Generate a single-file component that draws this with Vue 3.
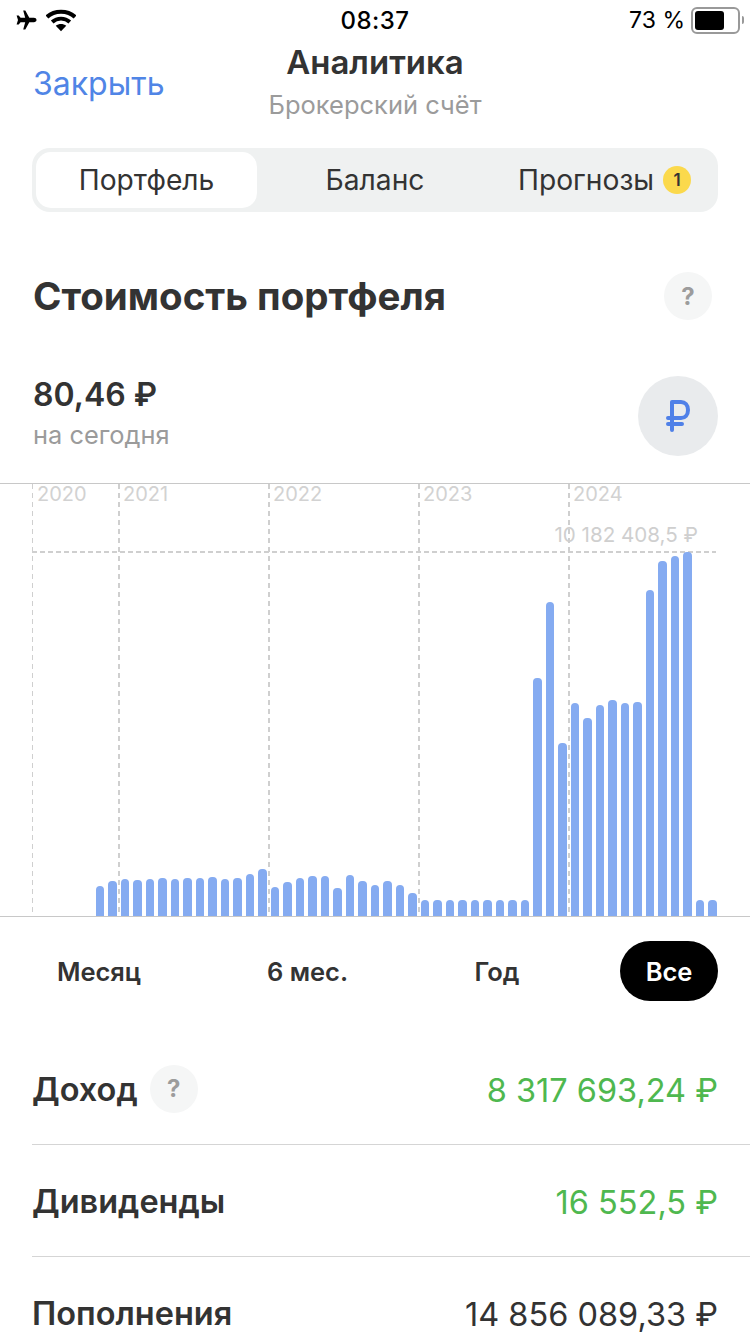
<script setup>
const tops = [886,881,879,880,879,878,879,878,878,877,879,878,874,869,887,882,878,876,876,888,875,881,885,881,885,893,900,900,900,900,900,900,900,900,900,678,602,743,703,718,705,700,703,702,590,561,556,552,900,900]
const bars = tops.map((t) => 916 - t)
const years = [
  { label: '2020', left: 32 },
  { label: '2021', left: 118 },
  { label: '2022', left: 268 },
  { label: '2023', left: 418 },
  { label: '2024', left: 568 }
]
const periods = ['Месяц', '6 мес.', 'Год', 'Все']
</script>

<template>
  <div class="screen">
    <div class="status">
      <div class="status-left">
        <svg width="22" height="20" viewBox="0 0 22 20"><path d="M8.2 0.5h2.1l4 7.3h4.6c1.4 0 2.6.9 2.6 2.2s-1.2 2.2-2.600 2.200h-4.600l-4 7.300H8.200l2-7.300H5.600l-1.900 2.300H1.600L3 10 1.600 5.500h2.100l1.900 2.300h4.600z" fill="#000"/></svg>
        <svg width="30" height="23" viewBox="0 0 32 24"><path d="M1 8.300C8.900.7 23.100.7 31 8.300" fill="none" stroke="#000" stroke-width="4.400"/><path d="M6.600 13.500c5.300-4.700 13.500-4.700 18.800 0" fill="none" stroke="#000" stroke-width="4.200"/><path d="M16 23.500l-5.600-6c3.200-2.400 8-2.400 11.200 0z" fill="#000"/></svg>
      </div>
      <span class="time">08:37</span>
      <div class="status-right">
        <span class="pct">73 %</span>
        <div class="battery"><div class="battery-fill"></div></div>
        <div class="battery-cap"></div>
      </div>
    </div>

    <header class="nav">
      <span class="close">Закрыть</span>
      <div class="nav-title">
        <div class="title">Аналитика</div>
        <div class="subtitle">Брокерский счёт</div>
      </div>
    </header>

    <div class="tabs">
      <div class="tab active">Портфель</div>
      <div class="tab mid">Баланс</div>
      <div class="tab last">Прогнозы <span class="badge">1</span></div>
    </div>

    <div class="heading-row">
      <h1 class="heading">Стоимость портфеля</h1>
      <div class="help big">?</div>
    </div>

    <div class="value-row">
      <div class="value-text">
        <div class="value">80,46 ₽</div>
        <div class="value-sub">на сегодня</div>
      </div>
      <div class="currency">
        <svg width="24" height="32" viewBox="0 0 24 32"><path d="M6 30V2h9c4 0 7 3 7 8s-3 8-7 8H2M2 24h14" fill="none" stroke="#4f80e8" stroke-width="4" stroke-linecap="round" stroke-linejoin="round"/></svg>
      </div>
    </div>

    <div class="chart">
      <div
        v-for="y in years"
        :key="y.label"
        class="vline"
        :style="{ left: y.left + 'px' }"
      ><span class="year">{{ y.label }}</span></div>
      <div class="hline"></div>
      <span class="max">10 182 408,5 ₽</span>
      <div class="bars">
        <div v-for="(h, i) in bars" :key="i" class="bar" :style="{ height: h + 'px' }"></div>
      </div>
    </div>

    <div class="periods">
      <div v-for="p in periods" :key="p" class="period" :class="{ on: p === 'Все' }">{{ p }}</div>
    </div>

    <div class="rows">
      <div class="row">
        <div class="row-label">Доход <span class="help small">?</span></div>
        <div class="row-value green">8 317 693,24 ₽</div>
      </div>
      <div class="row">
        <div class="row-label">Дивиденды</div>
        <div class="row-value green">16 552,5 ₽</div>
      </div>
      <div class="row">
        <div class="row-label">Пополнения</div>
        <div class="row-value">14 856 089,33 ₽</div>
      </div>
    </div>
  </div>
</template>

<style>
html, body { margin: 0; background: #fff; }
</style>

<style scoped>
.screen {
  width: 750px;
  height: 1334px;
  overflow: hidden;
  background: #fff;
  color: #333;
  font-family: Inter, "Noto Sans", sans-serif;
}
.status {
  height: 40px;
  display: grid;
  grid-template-columns: 1fr auto 1fr;
  align-items: center;
  padding: 0 6px 0 15px;
  color: #000;
}
.status-left { display: flex; align-items: center; gap: 9px; }
.time { font-size: 24px; font-weight: 500; letter-spacing: 0.5px; margin-right: 9px; }
.status-right { display: flex; align-items: center; justify-content: flex-end; }
.pct { font-size: 23px; margin-right: 6px; }
.battery {
  width: 41px;
  height: 19px;
  border: 2px solid #999;
  border-radius: 6px;
  padding: 2px;
  box-sizing: content-box;
  display: flex;
}
.battery-fill { width: 29px; background: #000; border-radius: 3px; }
.battery-cap { width: 2px; height: 8px; margin-left: 2px; background: #999; border-radius: 0 2px 2px 0; }
.nav { position: relative; height: 84px; display: flex; align-items: center; padding: 0 33px; }
.close { font-size: 32px; color: #5085e6; position: relative; top: 1px; }
.nav-title { position: absolute; left: 0; right: 0; top: 3px; text-align: center; pointer-events: none; }
.title { font-size: 33px; font-weight: 600; line-height: 38px; }
.subtitle { font-size: 25.5px; color: #9b9b9b; line-height: 28px; margin-top: 10px; }
.tabs {
  margin: 24px 32px 0;
  height: 64px;
  box-sizing: border-box;
  padding: 4px;
  background: #eff1f1;
  border-radius: 18px;
  display: flex;
  align-items: center;
}
.tab { font-size: 28.2px; display: flex; align-items: center; justify-content: center; height: 56px; }
.tab.active { width: 221px; background: #fff; border-radius: 15px; }
.tab.mid { width: 236px; }
.tab.last { flex: 1; gap: 9px; justify-content: flex-start; padding-left: 25px; }
.badge {
  width: 28px;
  height: 28px;
  border-radius: 50%;
  background: #fbd94c;
  font-size: 17px;
  font-weight: 600;
  display: flex;
  align-items: center;
  justify-content: center;
}
.heading-row { margin: 60px 38px 0 33px; display: flex; justify-content: space-between; align-items: center; height: 48px; }
.heading { margin: 0; font-size: 38.5px; font-weight: 700; }
.help {
  width: 48px;
  height: 48px;
  border-radius: 50%;
  background: #f5f6f6;
  color: #9c9c9c;
  font-weight: 700;
  font-size: 24px;
  display: flex;
  align-items: center;
  justify-content: center;
}
.value-row { margin: 56px 32px 0 33px; display: flex; justify-content: space-between; align-items: center; height: 80px; }
.value-text { position: relative; top: -4px; }
.value { font-size: 32px; font-weight: 600; line-height: 38px; }
.value-sub { font-size: 25.4px; color: #9b9b9b; line-height: 28px; margin-top: 7px; }
.currency {
  width: 80px;
  height: 80px;
  border-radius: 50%;
  background: #e9ebed;
  display: flex;
  align-items: center;
  justify-content: center;
}
.chart {
  position: relative;
  margin-top: 27px;
  height: 432px;
  border-top: 1px solid #c8c8c8;
  border-bottom: 1px solid #c8c8c8;
}
.vline {
  position: absolute;
  top: 0;
  bottom: 0;
  width: 2px;
  background: repeating-linear-gradient(to bottom, #cfcfcf 0 5px, transparent 5px 9px);
}
.vline:first-of-type { width: 1px; }
.year {
  position: absolute;
  left: 5px;
  top: -1px;
  font-size: 20px;
  line-height: 22px;
  color: #d2d2d2;
}
.hline {
  position: absolute;
  left: 32px;
  width: 684px;
  top: 67px;
  height: 2px;
  background: repeating-linear-gradient(to right, #cfcfcf 0 5px, transparent 5px 8px);
}
.max {
  position: absolute;
  right: 52px;
  top: 39px;
  font-size: 20.6px;
  line-height: 24px;
  white-space: nowrap;
  color: #cfcfcf;
}
.bars {
  position: absolute;
  left: 95.5px;
  bottom: 0;
  display: flex;
  align-items: flex-end;
  gap: 4px;
}
.bar {
  width: 8.5px;
  background: #85abf1;
  border-radius: 4px 4px 0 0;
}
.periods { display: flex; align-items: center; height: 60px; margin-top: 24px; padding-left: 32px; }
.period { font-size: 25.5px; font-weight: 600; display: flex; align-items: center; justify-content: center; height: 60px; border-radius: 30px; }
.period:nth-child(1) { width: 134px; }
.period:nth-child(2) { width: 283px; }
.period:nth-child(3) { width: 96px; }
.period:nth-child(4) { width: 98px; margin-left: 75px; }
.period.on { background: #000; color: #fff; }
.rows { margin-top: 32px; padding-left: 32px; }
.row {
  height: 112px;
  display: flex;
  align-items: center;
  justify-content: space-between;
  padding-right: 32px;
  border-bottom: 1px solid #d5d5d5;
  box-sizing: border-box;
}
.row-label { font-size: 32.5px; font-weight: 600; display: flex; align-items: center; gap: 12px; padding-top: 2px; }
.row-label .help { margin-top: -2px; font-size: 24px; }
.row-value { font-size: 32.5px; padding-top: 3px; }
.green { color: #4fb84f; }
</style>
